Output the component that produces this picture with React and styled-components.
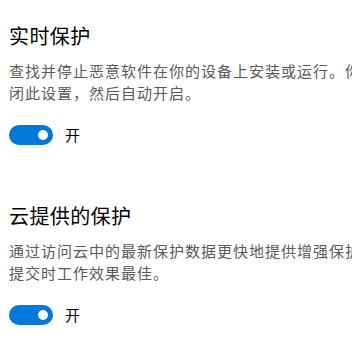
import React from "react";
import styled, { createGlobalStyle } from "styled-components";

const Global = createGlobalStyle`
  html, body { margin: 0; padding: 0; background: #ffffff; overflow: hidden; }
  body { font-family: "Noto Sans CJK SC", "Noto Sans", sans-serif; }
`;

const Page = styled.div`
  width: 352px;
  height: 342px;
  overflow: hidden;
  padding: 22px 0 0 9px;
  box-sizing: border-box;
  display: flex;
  flex-direction: column;
  gap: 57px;
`;

const Section = styled.section`
  display: flex;
  flex-direction: column;
`;

const Title = styled.h2`
  margin: 0;
  font-size: 20px;
  font-weight: 400;
  line-height: 28px;
  color: #000000;
  white-space: nowrap;
  letter-spacing: 0.4px;
`;

const Desc = styled.p`
  margin: 10px 0 0;
  font-size: 15px;
  line-height: 22px;
  color: #5a5a5a;
  white-space: nowrap;
  letter-spacing: 1px;
`;

const ToggleRow = styled.div`
  margin-top: 21px;
  display: flex;
  align-items: center;
  gap: 12px;
  height: 20px;
`;

const Track = styled.div`
  width: 44px;
  height: 20px;
  border-radius: 10px;
  background: ${(p) => (p.$on ? "#0078d7" : "#ffffff")};
  box-sizing: border-box;
  display: flex;
  align-items: center;
  justify-content: ${(p) => (p.$on ? "flex-end" : "flex-start")};
  padding: 0 5px;
`;

const Knob = styled.span`
  width: 10px;
  height: 10px;
  border-radius: 50%;
  background: #ffffff;
`;

const ToggleLabel = styled.span`
  font-size: 15px;
  line-height: 20px;
  color: #000000;
`;

function Toggle({ on, label }) {
  return (
    <ToggleRow>
      <Track $on={on}>
        <Knob />
      </Track>
      <ToggleLabel>{label}</ToggleLabel>
    </ToggleRow>
  );
}

export default function App() {
  return (
    <>
      <Global />
      <Page>
        <Section>
          <Title>实时保护</Title>
          <Desc>
            查找并停止恶意软件在你的设备上安装或运行。你可以在短时间内关
            <br />
            闭此设置，然后自动开启。
          </Desc>
          <Toggle on label="开" />
        </Section>
        <Section>
          <Title>云提供的保护</Title>
          <Desc>
            通过访问云中的最新保护数据更快地提供增强保护。启用自动样本
            <br />
            提交时工作效果最佳。
          </Desc>
          <Toggle on label="开" />
        </Section>
      </Page>
    </>
  );
}
